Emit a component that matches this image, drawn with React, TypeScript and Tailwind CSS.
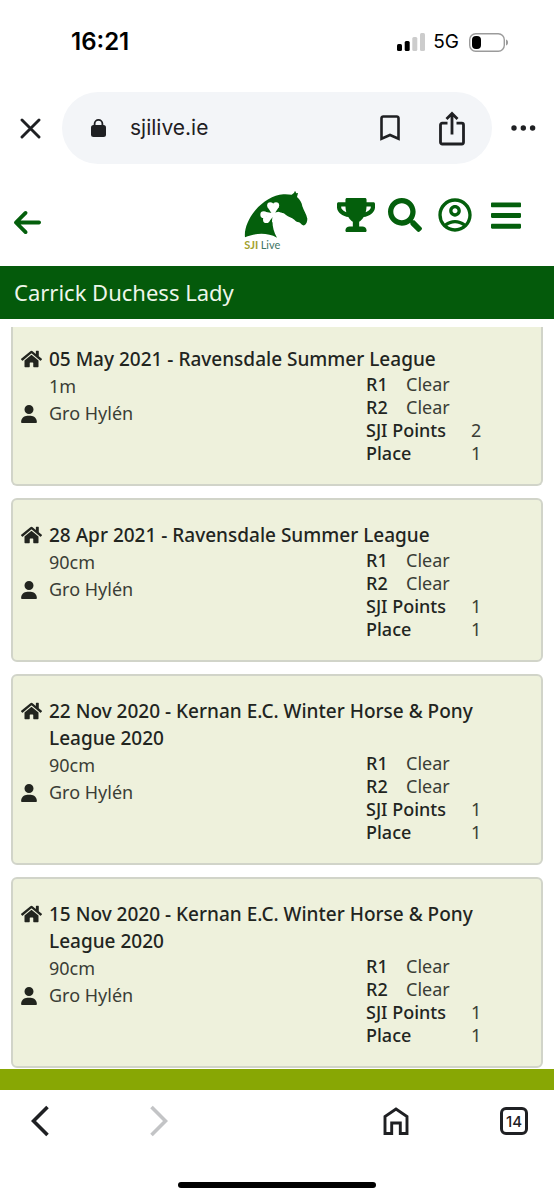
import React from 'react';
import { FaArrowLeft, FaUser } from 'react-icons/fa6';
import { FaBars, FaHome, FaSearch, FaTrophy } from 'react-icons/fa';
import { MdOutlineAccountCircle } from 'react-icons/md';

type Result = {
  date: string;
  event: string;
  height: string;
  rider: string;
  rounds: string[];
  points: number;
  place: number;
};

const results: Result[] = [
  { date: '05 May 2021', event: 'Ravensdale Summer League', height: '1m', rider: 'Gro Hylén', rounds: ['Clear', 'Clear'], points: 2, place: 1 },
  { date: '28 Apr 2021', event: 'Ravensdale Summer League', height: '90cm', rider: 'Gro Hylén', rounds: ['Clear', 'Clear'], points: 1, place: 1 },
  { date: '22 Nov 2020', event: 'Kernan E.C. Winter Horse & Pony League 2020', height: '90cm', rider: 'Gro Hylén', rounds: ['Clear', 'Clear'], points: 1, place: 1 },
  { date: '15 Nov 2020', event: 'Kernan E.C. Winter Horse & Pony League 2020', height: '90cm', rider: 'Gro Hylén', rounds: ['Clear', 'Clear'], points: 1, place: 1 },
];

const StatusBar: React.FC = () => (
  <div className="flex h-[84px] items-center justify-between pl-[71px] pr-[46px] font-['Inter',sans-serif] text-black">
    <time className="text-2xl font-semibold leading-7">16:21</time>
    <div className="flex items-center">
      <svg width="28" height="18" viewBox="0 0 28 18" aria-hidden="true">
        <rect x="0" y="11" width="5" height="7" rx="1.5" fill="#000" />
        <rect x="7.7" y="8" width="5" height="10" rx="1.5" fill="#000" />
        <rect x="15.3" y="4" width="5" height="14" rx="1.5" fill="#ccc" />
        <rect x="23" y="0" width="5" height="18" rx="1.5" fill="#ccc" />
      </svg>
      <span className="ml-2 text-[19px] leading-6">5G</span>
      <svg className="ml-[10px]" width="39" height="19" viewBox="0 0 39 19" aria-hidden="true">
        <rect x="0.7" y="0.7" width="34.6" height="17.6" rx="6" fill="none" stroke="#9b9b9b" strokeWidth="1.4" />
        <rect x="3" y="3" width="9" height="13" rx="4" fill="#000" />
        <path d="M37 6.5c1.6.8 2 1.7 2 3s-.4 2.2-2 3z" fill="#9b9b9b" />
      </svg>
    </div>
  </div>
);

const BrowserBar: React.FC = () => (
  <div className="flex items-center pb-2 pl-5 pr-[18px] pt-2 text-[#1f2023]">
    <button type="button" aria-label="Close">
      <svg width="21" height="21" viewBox="0 0 21 21" fill="none" stroke="currentColor" strokeWidth="2.9" strokeLinecap="round">
        <path d="M2 2l17 17M19 2L2 19" />
      </svg>
    </button>
    <div className="ml-[21px] mr-[19px] flex h-[72px] flex-1 items-center rounded-full bg-[#f3f5f8] pl-[29px] pr-[27px]">
      <svg width="15" height="18" viewBox="0 0 15 18" aria-hidden="true">
        <rect x="0" y="6" width="15" height="12" rx="2.5" fill="currentColor" />
        <path d="M3.6 8V4.8a3.9 3.9 0 0 1 7.8 0V8" fill="none" stroke="currentColor" strokeWidth="1.8" />
      </svg>
      <span className="ml-6 flex-1 font-['Inter',sans-serif] text-[21px] leading-7">sjilive.ie</span>
      <button type="button" aria-label="Bookmark">
        <svg width="20" height="26" viewBox="0 0 20 26" fill="none" stroke="currentColor" strokeWidth="2.6">
          <path d="M1.5 23.8V3.2a1.7 1.7 0 0 1 1.7-1.7h13.6a1.7 1.7 0 0 1 1.7 1.7v20.6L10 20z" />
        </svg>
      </button>
      <button type="button" aria-label="Share" className="ml-[39px]">
        <svg width="26" height="35" viewBox="0 0 26 35" fill="none" stroke="currentColor" strokeWidth="2.8">
          <path d="M8.5 12.2H3.2a1.7 1.7 0 0 0-1.7 1.7v17.4A1.7 1.7 0 0 0 3.2 33h19.6a1.7 1.7 0 0 0 1.7-1.7V13.9a1.7 1.7 0 0 0-1.700-1.7h-5.300M13 23.500V2.500M7.500 8L13 2.500 18.500 8" />
        </svg>
      </button>
    </div>
    <button type="button" aria-label="More">
      <svg width="25" height="6" viewBox="0 0 25 6" fill="currentColor">
        <circle cx="3" cy="3" r="2.7" />
        <circle cx="12.3" cy="3" r="2.7" />
        <circle cx="21.6" cy="3" r="2.7" />
      </svg>
    </button>
  </div>
);

const Logo: React.FC = () => (
  <svg width="66" height="62" viewBox="42 28 198 186" role="img" aria-label="SJI Live">
    <path
      fill="#045f0c"
      d="M45 173C42 150 54 118 76 92C98 66 130 46 160 44C170 43 178 45 185 45C189 41 193 41 195 33L199 41L204 40L201 52C210 60 215 68 217 80C221 92 229 103 232 117C232 125 229 134 223 137C217 139 213 131 207 128C200 127 197 125 193 120C185 113 175 112 168 106C161 99 154 98 146 101L128 118C126 136 130 155 141 174C111 158 76 160 45 173Z"
    />
    {/* shamrock */}
    <g fill="#fff">
      <circle cx="121" cy="77" r="9.500" />
      <circle cx="138" cy="77" r="9.500" />
      <path d="M112 81L147 81L133 103H126Z" />
      <circle cx="101" cy="105" r="10" />
      <circle cx="109" cy="120" r="10" />
      <path d="M104 96L130 101V110L116 127Z" />
      <path d="M128 100L146 96L158 101L146 124L126 128Z" />
    </g>
    <text x="43" y="208" fontFamily="Lato, sans-serif" fontSize="33" fontWeight="700" fill="#a3a12d">SJI</text>
    <text x="92" y="208" fontFamily="Lato, sans-serif" fontSize="33" fill="#3f7565">Live</text>
  </svg>
);

const AppHeader: React.FC = () => (
  <header className="grid h-[94px] grid-cols-[1fr_66px_1fr] items-center px-[14px] text-[#045f0c]">
    <button type="button" aria-label="Back" className="mt-[6px] justify-self-start">
      <FaArrowLeft className="h-[31px] w-[27px]" />
    </button>
    <a href="#home" className="mt-[2px]">
      <Logo />
    </a>
    <nav className="mb-2 mr-[19px] flex items-center justify-end">
      <button type="button" aria-label="Leaderboards">
        <FaTrophy className="h-[34px] w-[38px]" />
      </button>
      <button type="button" aria-label="Search" className="ml-[13px]">
        <FaSearch className="size-[34px]" />
      </button>
      <button type="button" aria-label="Account" className="ml-[13px]">
        <MdOutlineAccountCircle className="size-10" />
      </button>
      <button type="button" aria-label="Menu" className="ml-4">
        <FaBars className="h-[35px] w-[30px]" />
      </button>
    </nav>
  </header>
);

const ResultCard: React.FC<{ result: Result; first: boolean }> = ({ result, first }) => (
  <li
    className={
      first
        ? 'rounded-b-md border-2 border-t-0 border-[#d1d4c9] bg-[#eef1dc] pb-[19px] pl-2 pt-[19px]'
        : 'rounded-md border-2 border-[#d1d4c9] bg-[#eef1dc] pb-[19px] pl-2 pt-[22px]'
    }
  >
    <div className="flex">
      <FaHome className="mt-[3px] h-5 w-[21px] shrink-0" />
      <h2 className="ml-[7px] mr-12 flex-1 text-[19px] font-medium leading-[27px]">
        {`${result.date} - ${result.event}`}
      </h2>
    </div>
    <div className="flex leading-[27px]">
      <div className="flex-1 text-[#3a3d36]">
        <p className="pl-7">{result.height}</p>
        <p className="flex items-center">
          <FaUser className="h-[18px] w-4 text-[#22251f]" />
          <span className="ml-3">{result.rider}</span>
        </p>
      </div>
      <dl className="w-[175px] leading-[23px]">
        {result.rounds.map((round, i) => (
          <div key={i} className="flex">
            <dt className="w-10 font-medium">{`R${i + 1}`}</dt>
            <dd className="text-[#3a3d36]">{round}</dd>
          </div>
        ))}
        <div className="flex">
          <dt className="w-[105px] font-medium">SJI Points</dt>
          <dd className="text-[#3a3d36]">{result.points}</dd>
        </div>
        <div className="flex">
          <dt className="w-[105px] font-medium">Place</dt>
          <dd className="text-[#3a3d36]">{result.place}</dd>
        </div>
      </dl>
    </div>
  </li>
);

const BottomBar: React.FC = () => (
  <footer>
    <nav className="flex h-[62px] items-center justify-between px-5 text-[#1f2023]">
      <button type="button" aria-label="Previous page" className="flex w-10 justify-center">
        <svg width="18" height="32" viewBox="0 0 18 32" fill="none" stroke="currentColor" strokeWidth="3.6">
          <path d="M16.5 2L2.5 16l14 14" />
        </svg>
      </button>
      <button type="button" aria-label="Next page" disabled className="flex w-10 justify-center text-[#c3c4c6]">
        <svg width="18" height="32" viewBox="0 0 18 32" fill="none" stroke="currentColor" strokeWidth="3.6">
          <path d="M1.5 2l14 14-14 14" />
        </svg>
      </button>
      <span className="w-10" />
      <button type="button" aria-label="Home" className="flex w-10 justify-center">
        <svg width="26" height="28" viewBox="0 0 26 28" fill="none" stroke="currentColor" strokeWidth="2.9">
          <path d="M2 26.5V9.5L13 2l11 7.5v17h-6.700v-10.500H8.700v10.500z" />
        </svg>
      </button>
      <button type="button" aria-label="Tabs" className="flex w-10 justify-center">
        <span className="flex size-7 items-center justify-center rounded-md border-[3px] border-[#1f2023] font-['Inter',sans-serif] text-[15px] font-medium leading-none">
          14
        </span>
      </button>
    </nav>
    <div className="mx-auto mb-3 mt-[30px] h-[6px] w-[198px] rounded-full bg-black" />
  </footer>
);

const App: React.FC = () => {
  return (
    <div className="min-h-screen bg-white">
      <StatusBar />
      <BrowserBar />
      <AppHeader />
      <h1 className="bg-[#045a0b] px-[14px] py-[13px] font-['Noto_Sans',sans-serif] text-[22px] leading-[27px] text-[#eef6ea]">
        Carrick Duchess Lady
      </h1>
      <ul className="flex flex-col gap-3 px-[11px] pb-px pt-2 font-['Noto_Sans',sans-serif] text-lg text-[#22251f]">
        {results.map((result, i) => (
          <ResultCard key={result.date} result={result} first={i === 0} />
        ))}
      </ul>
      <div className="h-[21px] bg-[#88a704]" />
      <BottomBar />
    </div>
  );
};

export default App;
